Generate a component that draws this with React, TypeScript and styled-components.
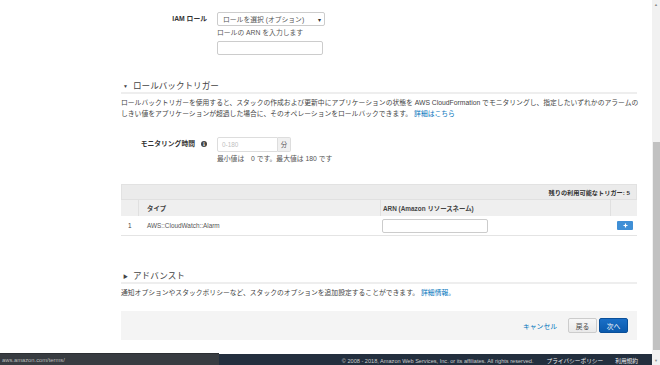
import { FC } from "react";
import styled, { createGlobalStyle } from "styled-components";

const GlobalStyle = createGlobalStyle`
  html, body {
    margin: 0;
    padding: 0;
    background: #ffffff;
  }
  body {
    font-family: "Liberation Sans", "Noto Sans CJK JP", sans-serif;
    color: #444444;
  }
`;

const FONT = `"Liberation Sans", "Noto Sans CJK JP", sans-serif`;

const App: FC = () => {
  return (
    <>
      <GlobalStyle />
      <SWindow>
        <SPage>
          <SContent>
            <SFormRow>
              <SLabel>IAM ロール</SLabel>
              <SField>
                <SSelect>
                  <span>ロールを選択 (オプション)</span>
                  <SCaret>▾</SCaret>
                </SSelect>
                <SHint>ロールの ARN を入力します</SHint>
                <STextInput />
              </SField>
            </SFormRow>

            <SSectionTitle $top={25}>
              <STriangle>▼</STriangle>ロールバックトリガー
            </SSectionTitle>
            <SParagraph>
              ロールバックトリガーを使用すると、スタックの作成および更新中にアプリケーションの状態を AWS CloudFormation でモニタリングし、指定したいずれかのアラームの
              <br />
              しきい値をアプリケーションが超過した場合に、そのオペレーションをロールバックできます。<SLink>詳細はこちら</SLink>
            </SParagraph>

            <SFormRow $top={18}>
              <SLabel>
                モニタリング時間
                <SInfo>i</SInfo>
              </SLabel>
              <SField>
                <SInputGroup>
                  <SGroupInput>0-180</SGroupInput>
                  <SAddon>分</SAddon>
                </SInputGroup>
                <SHint>最小値は　0 です。最大値は 180 です</SHint>
              </SField>
            </SFormRow>

            <STable>
              <STableTop>残りの利用可能なトリガー: 5</STableTop>
              <STableHead>
                <SHeadCell />
                <SHeadCell>タイプ</SHeadCell>
                <SHeadCell>ARN (Amazon リソースネーム)</SHeadCell>
                <SHeadCell $last />
              </STableHead>
              <STableRow>
                <SIndexCell>1</SIndexCell>
                <SCell>AWS::CloudWatch::Alarm</SCell>
                <SCell>
                  <SArnInput />
                </SCell>
                <SCell $center>
                  <SAddButton>
                    <svg width="5" height="5" viewBox="0 0 5 5">
                      <path d="M2.5 0.5v4M0.5 2.5h4" stroke="#fff" strokeWidth="1.2" />
                    </svg>
                  </SAddButton>
                </SCell>
              </STableRow>
            </STable>

            <SSectionTitle $top={34}>
              <STriangle>▶</STriangle>アドバンスト
            </SSectionTitle>
            <SParagraph>
              通知オプションやスタックポリシーなど、スタックのオプションを追加設定することができます。<SLink>詳細情報。</SLink>
            </SParagraph>

            <SActions>
              <SCancel>キャンセル</SCancel>
              <SButton>戻る</SButton>
              <SButton $primary>次へ</SButton>
            </SActions>
          </SContent>

          <SFooter>
            <SCopyright>© 2008 - 2018, Amazon Web Services, Inc. or its affiliates. All rights reserved.</SCopyright>
            <SFooterLink>プライバシーポリシー</SFooterLink>
            <SFooterLink>利用規約</SFooterLink>
          </SFooter>
          <SStatus>aws.amazon.com/terms/</SStatus>
        </SPage>

        <SScrollbar>
          <SArrow>▲</SArrow>
          <SThumb />
          <SArrow>▼</SArrow>
        </SScrollbar>
      </SWindow>
    </>
  );
};

export default App;

const SWindow = styled.div`
  width: 660px;
  height: 365px;
  overflow: hidden;
  display: flex;
`;

const SPage = styled.div`
  flex: 1;
  position: relative;
  display: flex;
  flex-direction: column;
  font-family: ${FONT};
`;

const SContent = styled.div`
  width: 516px;
  padding: 12px 0 14px 121px;
  display: flex;
  flex-direction: column;
`;

const SFormRow = styled.div<{ $top?: number }>`
  display: grid;
  grid-template-columns: 86px 1fr;
  column-gap: 10px;
  margin-top: ${(p) => p.$top ?? 0}px;
`;

const SLabel = styled.div`
  font-size: 6.8px;
  font-weight: bold;
  color: #333333;
  text-align: right;
  height: 14px;
  line-height: 14px;
  display: flex;
  justify-content: flex-end;
  align-items: center;
  gap: 6px;
`;

const SInfo = styled.span`
  width: 6px;
  height: 6px;
  border-radius: 50%;
  background: #444444;
  color: #ffffff;
  font-size: 5px;
  line-height: 6px;
  text-align: center;
  font-family: "DejaVu Serif", serif;
`;

const SField = styled.div`
  display: flex;
  flex-direction: column;
  align-items: flex-start;
`;

const SSelect = styled.div`
  box-sizing: border-box;
  width: 108px;
  height: 14px;
  border: 1px solid #cccccc;
  border-radius: 2px;
  background: #ffffff;
  font-size: 6.8px;
  color: #555555;
  display: flex;
  align-items: center;
  justify-content: space-between;
  padding: 0 3px 0 5px;
`;

const SCaret = styled.span`
  font-size: 6px;
  color: #333333;
`;

const SHint = styled.div`
  font-size: 6.8px;
  color: #555555;
  line-height: 10px;
  margin-top: 2px;
`;

const STextInput = styled.div`
  box-sizing: border-box;
  width: 106px;
  height: 14px;
  margin-top: 3px;
  border: 1px solid #cccccc;
  border-radius: 2px;
  background: #ffffff;
`;

const SSectionTitle = styled.div<{ $top: number }>`
  margin-top: ${(p) => p.$top}px;
  font-size: 8.6px;
  line-height: 12px;
  color: #444444;
  border-bottom: 2px solid #eeeeee;
  display: flex;
  align-items: center;
`;

const STriangle = styled.span`
  font-size: 5px;
  color: #444444;
  margin: 0 5px 0 2px;
`;

const SParagraph = styled.div`
  margin-top: 3px;
  font-size: 6.8px;
  line-height: 11px;
  color: #444444;
  white-space: nowrap;
`;

const SLink = styled.span`
  color: #0073bb;
  margin-left: 2px;
`;

const SInputGroup = styled.div`
  display: flex;
  height: 15px;
  margin-top: 0;
`;

const SGroupInput = styled.div`
  box-sizing: border-box;
  width: 61px;
  border: 1px solid #dddddd;
  border-radius: 2px 0 0 2px;
  background: #ffffff;
  font-size: 6.4px;
  color: #c0c0c0;
  display: flex;
  align-items: center;
  padding-left: 4px;
`;

const SAddon = styled.div`
  box-sizing: border-box;
  width: 13px;
  border: 1px solid #dddddd;
  border-left: none;
  border-radius: 0 2px 2px 0;
  background: #f0f0f0;
  font-size: 6.4px;
  color: #555555;
  display: flex;
  align-items: center;
  justify-content: center;
`;

const STable = styled.div`
  margin-top: 20px;
  display: flex;
  flex-direction: column;
  border-bottom: 1px solid #e4e4e4;
`;

const STableTop = styled.div`
  height: 15px;
  background: #ebebeb;
  border: 1px solid #e2e2e2;
  border-bottom: none;
  box-sizing: border-box;
  font-size: 6.2px;
  font-weight: bold;
  color: #333333;
  display: flex;
  align-items: center;
  justify-content: flex-end;
  padding-right: 6px;
`;

const COLUMNS = "18px 242px 230px 1fr";

const STableHead = styled.div`
  display: grid;
  grid-template-columns: ${COLUMNS};
  height: 17px;
  background: #efefef;
  border-top: 1px solid #e0e0e0;
  box-sizing: border-box;
`;

const SHeadCell = styled.div<{ $last?: boolean }>`
  font-size: 6.4px;
  font-weight: bold;
  color: #444444;
  display: flex;
  align-items: center;
  padding-left: 8px;
  border-right: ${(p) => (p.$last ? "none" : "1px solid #e0e0e0")};
  &:nth-child(3) {
    padding-left: 2px;
  }
`;

const STableRow = styled.div`
  display: grid;
  grid-template-columns: ${COLUMNS};
  height: 19px;
  background: #ffffff;
`;

const SIndexCell = styled.div`
  font-size: 6.4px;
  color: #444444;
  display: flex;
  align-items: center;
  padding-left: 7px;
`;

const SCell = styled.div<{ $center?: boolean }>`
  font-size: 6.4px;
  color: #555555;
  display: flex;
  align-items: center;
  padding-left: ${(p) => (p.$center ? "6px" : "8px")};
  &:nth-child(3) {
    padding-left: 1px;
  }
`;

const SArnInput = styled.div`
  box-sizing: border-box;
  width: 106px;
  height: 14px;
  border: 1px solid #cccccc;
  border-radius: 2px;
  background: #ffffff;
`;

const SAddButton = styled.div`
  width: 16px;
  height: 9px;
  border-radius: 1px;
  background: #3f8fd6;
  display: flex;
  align-items: center;
  justify-content: center;
`;

const SActions = styled.div`
  margin-top: 13px;
  height: 29px;
  background: #f4f4f4;
  display: flex;
  align-items: center;
  justify-content: flex-end;
  gap: 2px;
  padding-right: 9px;
`;

const SCancel = styled.span`
  font-size: 6.8px;
  color: #0073bb;
  margin-right: 9px;
`;

const SButton = styled.div<{ $primary?: boolean }>`
  box-sizing: border-box;
  width: 29px;
  height: 15px;
  border-radius: 2px;
  font-size: 6.8px;
  display: flex;
  align-items: center;
  justify-content: center;
  color: ${(p) => (p.$primary ? "#ffffff" : "#444444")};
  background: ${(p) =>
    p.$primary ? "linear-gradient(#1a6fc7, #0b5aad)" : "linear-gradient(#f7f7f7, #e9e9e9)"};
  border: 1px solid ${(p) => (p.$primary ? "#0a4f99" : "#cccccc")};
`;

const SFooter = styled.div`
  height: 12px;
  flex-shrink: 0;
  background: #232f3e;
  display: flex;
  align-items: flex-end;
  justify-content: flex-end;
  gap: 12px;
  padding: 0 14px 1px 0;
  box-sizing: border-box;
`;

const SCopyright = styled.span`
  font-size: 5.6px;
  line-height: 8px;
  color: #cccccc;
  margin-right: 1px;
`;

const SFooterLink = styled.span`
  font-size: 5.7px;
  line-height: 8px;
  color: #eeeeee;
`;

const SStatus = styled.div`
  position: absolute;
  left: 0;
  bottom: 0;
  width: 219px;
  height: 12px;
  background: #383c41;
  color: #bbbbbb;
  font-size: 5.8px;
  display: flex;
  align-items: center;
  padding-left: 2px;
  box-sizing: border-box;
  border-top: 1px solid #2c2f33;
`;

const SScrollbar = styled.div`
  width: 8px;
  background: #f1f1f1;
  display: flex;
  flex-direction: column;
  align-items: center;
`;

const SArrow = styled.div`
  height: 9px;
  font-size: 4px;
  line-height: 9px;
  color: #8a8a8a;
`;

const SThumb = styled.div`
  width: 7px;
  height: 208px;
  margin: 133px 0 6px;
  background: #c1c1c1;
`;
